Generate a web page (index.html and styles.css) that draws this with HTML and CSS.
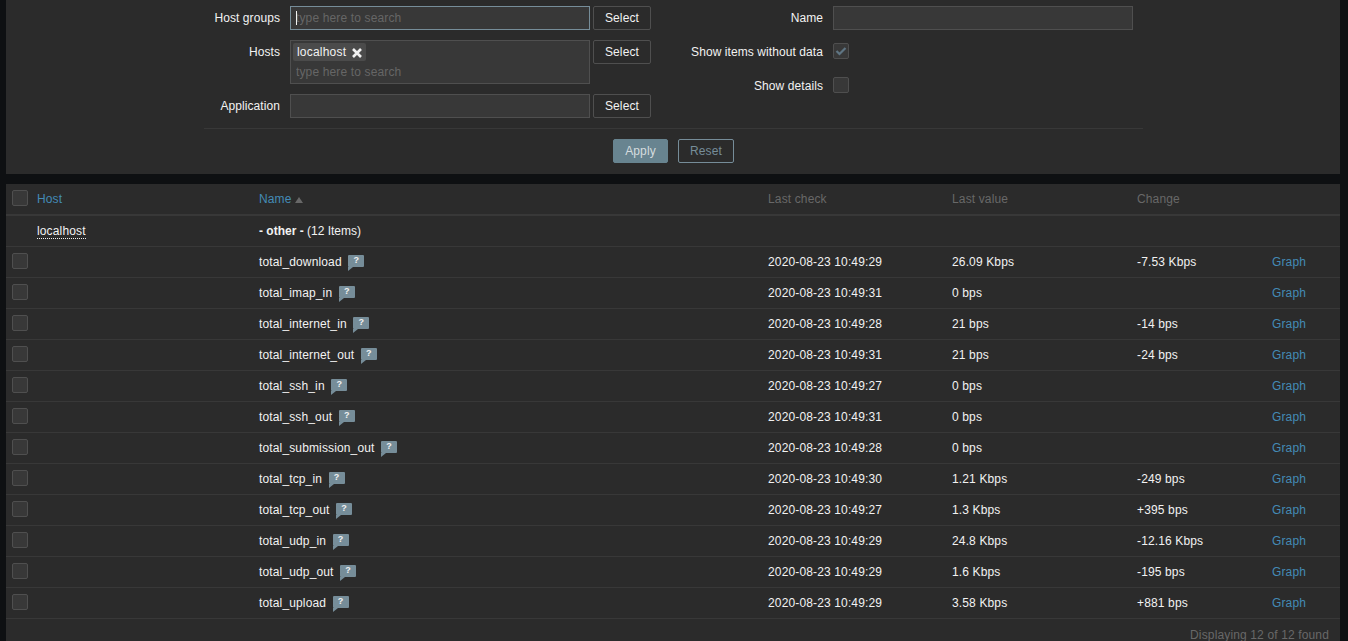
FILE: index.html
```html
<!DOCTYPE html>
<html lang="en">
<head>
  <meta charset="UTF-8" />
  <title>Latest data</title>
  <link rel="stylesheet" href="styles.css">
</head>
<body>

  <!-- Filter -->
  <form class="filter">
    <div class="filter-cols">
      <div class="filter-col left">
        <label>Host groups</label>
        <div class="multi focused">
          <input type="text" placeholder="type here to search">
          <span class="caret"></span>
        </div>
        <button type="button" class="btn-select">Select</button>

        <label>Hosts</label>
        <div class="multi tall">
          <span class="tag">localhost
            <svg width="10" height="10" viewBox="0 0 10 10"><path d="M1 1 L9 9 M9 1 L1 9" stroke="#f2f2f2" stroke-width="2.6" fill="none"/></svg>
          </span>
          <input type="text" placeholder="type here to search">
        </div>
        <button type="button" class="btn-select">Select</button>

        <label>Application</label>
        <div class="multi"><input type="text"></div>
        <button type="button" class="btn-select">Select</button>
      </div>

      <div class="filter-col right">
        <label>Name</label>
        <div class="multi wide"><input type="text"></div>

        <label>Show items without data</label>
        <span class="check on">
          <svg width="12" height="10" viewBox="0 0 12 10"><path d="M1.5 5 L4.5 8 L10.5 2" stroke="#5f7583" stroke-width="2.2" fill="none"/></svg>
        </span>

        <label>Show details</label>
        <span class="check"></span>
      </div>
    </div>

    <div class="filter-actions">
      <button type="button" class="btn-apply">Apply</button>
      <button type="button" class="btn-reset">Reset</button>
    </div>
  </form>

  <!-- Latest data -->
  <div class="data">
    <table>
      <colgroup>
        <col class="c-check"><col class="c-host"><col class="c-name"><col class="c-time"><col class="c-value"><col class="c-change"><col>
      </colgroup>
      <thead>
        <tr>
          <th><span class="check"></span></th>
          <th><a href="#">Host</a></th>
          <th><a href="#">Name</a><span class="sort"></span></th>
          <th>Last check</th>
          <th>Last value</th>
          <th>Change</th>
          <th></th>
        </tr>
      </thead>
      <tbody>
        <tr class="group">
          <td></td>
          <td><span class="host-link">localhost</span></td>
          <td colspan="5" class="group-name"><b>- other -</b> (12 Items)</td>
        </tr>
        <tr><td><span class="check"></span></td><td></td><td>total_download<span class="hint">?</span></td><td>2020-08-23 10:49:29</td><td>26.09 Kbps</td><td>-7.53 Kbps</td><td><a href="#">Graph</a></td></tr>
        <tr><td><span class="check"></span></td><td></td><td>total_imap_in<span class="hint">?</span></td><td>2020-08-23 10:49:31</td><td>0 bps</td><td></td><td><a href="#">Graph</a></td></tr>
        <tr><td><span class="check"></span></td><td></td><td>total_internet_in<span class="hint">?</span></td><td>2020-08-23 10:49:28</td><td>21 bps</td><td>-14 bps</td><td><a href="#">Graph</a></td></tr>
        <tr><td><span class="check"></span></td><td></td><td>total_internet_out<span class="hint">?</span></td><td>2020-08-23 10:49:31</td><td>21 bps</td><td>-24 bps</td><td><a href="#">Graph</a></td></tr>
        <tr><td><span class="check"></span></td><td></td><td>total_ssh_in<span class="hint">?</span></td><td>2020-08-23 10:49:27</td><td>0 bps</td><td></td><td><a href="#">Graph</a></td></tr>
        <tr><td><span class="check"></span></td><td></td><td>total_ssh_out<span class="hint">?</span></td><td>2020-08-23 10:49:31</td><td>0 bps</td><td></td><td><a href="#">Graph</a></td></tr>
        <tr><td><span class="check"></span></td><td></td><td>total_submission_out<span class="hint">?</span></td><td>2020-08-23 10:49:28</td><td>0 bps</td><td></td><td><a href="#">Graph</a></td></tr>
        <tr><td><span class="check"></span></td><td></td><td>total_tcp_in<span class="hint">?</span></td><td>2020-08-23 10:49:30</td><td>1.21 Kbps</td><td>-249 bps</td><td><a href="#">Graph</a></td></tr>
        <tr><td><span class="check"></span></td><td></td><td>total_tcp_out<span class="hint">?</span></td><td>2020-08-23 10:49:27</td><td>1.3 Kbps</td><td>+395 bps</td><td><a href="#">Graph</a></td></tr>
        <tr><td><span class="check"></span></td><td></td><td>total_udp_in<span class="hint">?</span></td><td>2020-08-23 10:49:29</td><td>24.8 Kbps</td><td>-12.16 Kbps</td><td><a href="#">Graph</a></td></tr>
        <tr><td><span class="check"></span></td><td></td><td>total_udp_out<span class="hint">?</span></td><td>2020-08-23 10:49:29</td><td>1.6 Kbps</td><td>-195 bps</td><td><a href="#">Graph</a></td></tr>
        <tr><td><span class="check"></span></td><td></td><td>total_upload<span class="hint">?</span></td><td>2020-08-23 10:49:29</td><td>3.58 Kbps</td><td>+881 bps</td><td><a href="#">Graph</a></td></tr>
      </tbody>
    </table>
    <div class="paging">Displaying 12 of 12 found</div>
  </div>

</body>
</html>
```

FILE: styles.css
```css
html, body {
  height: 641px;
  overflow: hidden;
}

body {
  margin: 0;
  padding: 0 8px 0 6px;
  background: #0e1012;
  font-family: Arial, "Liberation Sans", sans-serif;
  font-size: 12px;
  color: #f2f2f2;
  text-rendering: optimizeSpeed;
  letter-spacing: 0.14px;
}

a {
  color: #4796c4;
  opacity: 0.9;
  text-decoration: none;
}

/* Filter */
.filter {
  height: 174px;
  box-sizing: border-box;
  padding-top: 6px;
  background: #2b2b2b;
  margin-bottom: 10px;
}

.filter-cols {
  display: flex;
  width: 939px;
  margin-left: 198px;
  height: 122px;
  border-bottom: 1px solid #383838;
}

.filter-col {
  display: grid;
  align-content: start;
  align-items: start;
}

.filter-col label {
  text-align: right;
  line-height: 24px;
  white-space: nowrap;
  letter-spacing: 0.08px;
}

.left {
  width: 447px;
  grid-template-columns: 76px 300px 58px;
  column-gap: 10px;
  row-gap: 10px;
}

.left .btn-select {
  margin-left: -7px;
}

.right {
  width: 492px;
  grid-template-columns: 172px 300px;
  column-gap: 10px;
  row-gap: 10px;
}

.multi {
  position: relative;
  box-sizing: border-box;
  height: 24px;
  background: #383838;
  border: 1px solid #4f4f4f;
}

.multi.tall {
  height: 44px;
  padding: 2px;
}

.multi.focused {
  border-color: #768d99;
}

.multi input {
  display: block;
  box-sizing: border-box;
  width: 100%;
  height: 22px;
  padding: 0 5px;
  border: 0;
  outline: 0;
  background: transparent;
  color: #f2f2f2;
  font: inherit;
  letter-spacing: inherit;
}

.multi.tall input {
  height: 20px;
  margin: 1px 0 0 -2px;
}

.multi input::placeholder {
  color: #666;
  opacity: 1;
}

.caret {
  position: absolute;
  left: 5px;
  top: 4px;
  width: 1px;
  height: 14px;
  background: #f2f2f2;
}

.tag {
  display: flex;
  align-items: center;
  gap: 6px;
  width: max-content;
  box-sizing: border-box;
  height: 18px;
  padding: 0 4px 0 4px;
  background: #4b4b4b;
  border-radius: 2px;
  letter-spacing: 0.2px;
}

.tag svg {
  margin-top: 1px;
}

.btn-select {
  box-sizing: border-box;
  width: 58px;
  height: 24px;
  padding: 0;
  background: #2b2b2b;
  border: 1px solid #4f4f4f;
  border-radius: 2px;
  color: #f2f2f2;
  font: inherit;
  letter-spacing: inherit;
}

.check {
  display: block;
  box-sizing: border-box;
  width: 16px;
  height: 16px;
  background: #383838;
  border: 1px solid #4f4f4f;
  border-radius: 2px;
}

.right .check {
  margin-top: 3px;
  margin-bottom: 1px;
}

.check.on {
  display: flex;
  align-items: center;
  justify-content: center;
}

table .check {
  margin-bottom: 2px;
}

.filter-actions {
  display: flex;
  justify-content: center;
  gap: 10px;
  padding-top: 10px;
}

.filter-actions button {
  box-sizing: border-box;
  height: 24px;
  padding: 0 0 0 1px;
  border-radius: 2px;
  font: inherit;
  letter-spacing: inherit;
}

.btn-apply {
  width: 55px;
  background: #688490;
  border: 1px solid #688490;
  color: #d5dcdf;
}

.btn-reset {
  width: 56px;
  background: transparent;
  border: 1px solid #768d99;
  color: #768d99;
}

/* Latest data */
.data {
  background: #2b2b2b;
  height: 460px;
}

table {
  width: 100%;
  table-layout: fixed;
  border-collapse: collapse;
}

.c-check { width: 31px; }
.c-host { width: 222px; }
.c-name { width: 509px; }
.c-time { width: 184px; }
.c-value { width: 185px; }
.c-change { width: 135px; }

th, td {
  box-sizing: border-box;
  padding: 0;
  text-align: left;
  font-weight: normal;
  white-space: nowrap;
}

th {
  height: 31px;
  color: #686868;
  border-bottom: 2px solid #383838;
}

td {
  height: 31px;
  border-bottom: 1px solid #383838;
}

th:first-child, td:first-child {
  padding-left: 6px;
}

.group-name {
  letter-spacing: 0;
}

.host-link {
  border-bottom: 1px dotted #f2f2f2;
}

.sort {
  display: inline-block;
  margin-left: 3px;
  border-left: 4px solid transparent;
  border-right: 4px solid transparent;
  border-bottom: 6px solid #686868;
}

.hint {
  position: relative;
  display: inline-block;
  vertical-align: 3px;
  width: 16px;
  height: 12px;
  margin-left: 6.5px;
  background: #768d99;
  border-radius: 1px;
  color: #f2f2f2;
  font-size: 9px;
  font-weight: bold;
  line-height: 11px;
  letter-spacing: 0;
  text-align: center;
}

.hint::after {
  content: "";
  position: absolute;
  left: 0;
  top: 12px;
  border-top: 4px solid #768d99;
  border-right: 5px solid transparent;
}

.paging {
  padding: 9px 11px 0 0;
  text-align: right;
  color: #686868;
}
```
